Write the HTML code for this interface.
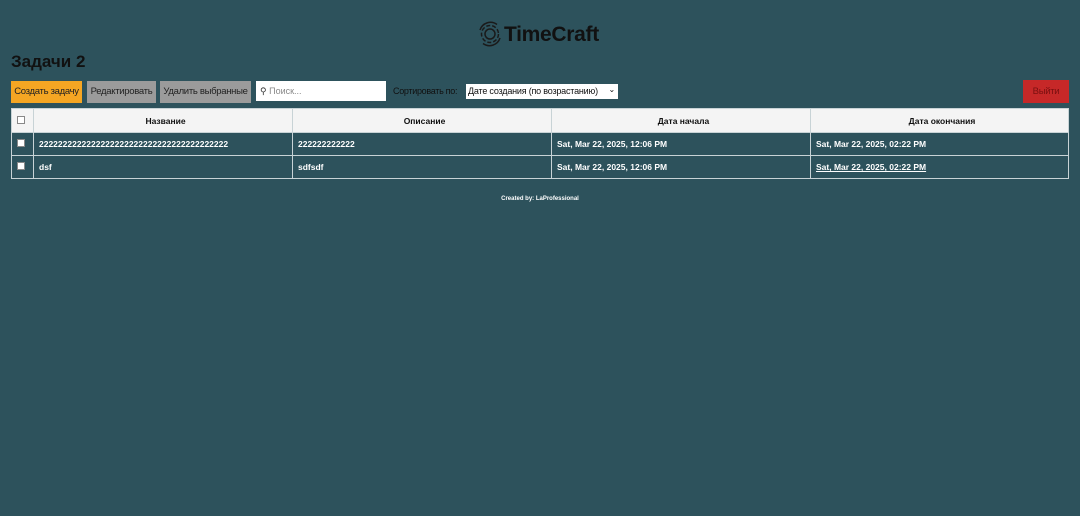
<!DOCTYPE html>
<html><head><meta charset="utf-8"><style>
body{margin:0;width:1080px;height:516px;background:#2d525c;font-family:"Liberation Sans",sans-serif;position:relative;overflow:hidden}
.a{position:absolute;white-space:nowrap}
.btn{position:absolute;top:81px;height:22px;font-size:9.5px;letter-spacing:-0.3px;line-height:22px;text-align:center;color:#222;white-space:nowrap;overflow:hidden}
table{position:absolute;left:11px;top:108px;width:1058px;border-collapse:collapse;table-layout:fixed;font-size:8.5px;color:#fff}
td,th{border:1px solid #c8d3d6;height:22px;padding:0 0 0 5px;text-align:left;white-space:nowrap;overflow:hidden}
th{background:#f4f4f4;color:#111;text-align:center;font-weight:bold;height:23px}
td{font-weight:bold}
.cb{display:inline-block;width:6px;height:6px;background:#fff;border:1px solid #888}
</style></head><body>
<div class="a" style="left:477px;top:21px;width:26px;height:26px">
<svg width="26" height="26" viewBox="0 0 26 26" fill="none" stroke="#1a1a1a" stroke-width="1.5"><circle cx="13" cy="13" r="5"/><circle cx="13" cy="13" r="8.5" stroke-dasharray="4 2"/><path d="M3 9 A11 11 0 0 1 20 3.5"/><path d="M23 17 A11 11 0 0 1 6 22.5"/></svg></div>
<div class="a" style="left:504px;top:21px;font-size:21px;font-weight:bold;color:#111;line-height:28px;letter-spacing:-0.3px">TimeCraft</div>
<div class="a" style="left:11px;top:52px;font-size:17px;font-weight:bold;color:#111">Задачи 2</div>
<div class="btn" style="left:11px;width:71px;background:#f5a623">Создать задачу</div>
<div class="btn" style="left:87px;width:69px;background:#9b9b9b">Редактировать</div>
<div class="btn" style="left:160px;width:91px;background:#9b9b9b">Удалить выбранные</div>
<div class="a" style="left:256px;top:81px;width:130px;height:20px;background:#fff;font-size:9px;line-height:20px;color:#888;padding-left:4px;box-sizing:border-box"><span style="color:#333">&#9906;</span> Поиск...</div>
<div class="a" style="left:393px;top:86px;font-size:9px;letter-spacing:-0.3px;color:#111">Сортировать по:</div>
<div class="a" style="left:466px;top:84px;width:152px;height:15px;background:#fff;font-size:9px;letter-spacing:-0.2px;line-height:15px;color:#111;padding-left:2px;box-sizing:border-box">Дате создания (по возрастанию) <span style="position:absolute;right:3px;top:-2px;font-size:8px">&#8964;</span></div>
<div class="btn" style="left:1023px;width:46px;top:80px;height:23px;background:#c62828;color:#7a1010;line-height:23px">Выйти</div>
<table>
<colgroup><col style="width:22px"><col style="width:259px"><col style="width:259px"><col style="width:259px"><col></colgroup>
<tr><th style="text-align:left"><span class="cb"></span></th><th>Название</th><th>Описание</th><th>Дата начала</th><th>Дата окончания</th></tr>
<tr><td><span class="cb"></span></td><td>2222222222222222222222222222222222222222</td><td>222222222222</td><td>Sat, Mar 22, 2025, 12:06 PM</td><td>Sat, Mar 22, 2025, 02:22 PM</td></tr>
<tr><td><span class="cb"></span></td><td>dsf</td><td>sdfsdf</td><td>Sat, Mar 22, 2025, 12:06 PM</td><td><u>Sat, Mar 22, 2025, 02:22 PM</u></td></tr>
</table>
<div class="a" style="left:0;width:1080px;top:196px;text-align:center;font-size:6px;color:#fff;font-weight:bold">Created by: LaProfessional</div>
</body></html>
